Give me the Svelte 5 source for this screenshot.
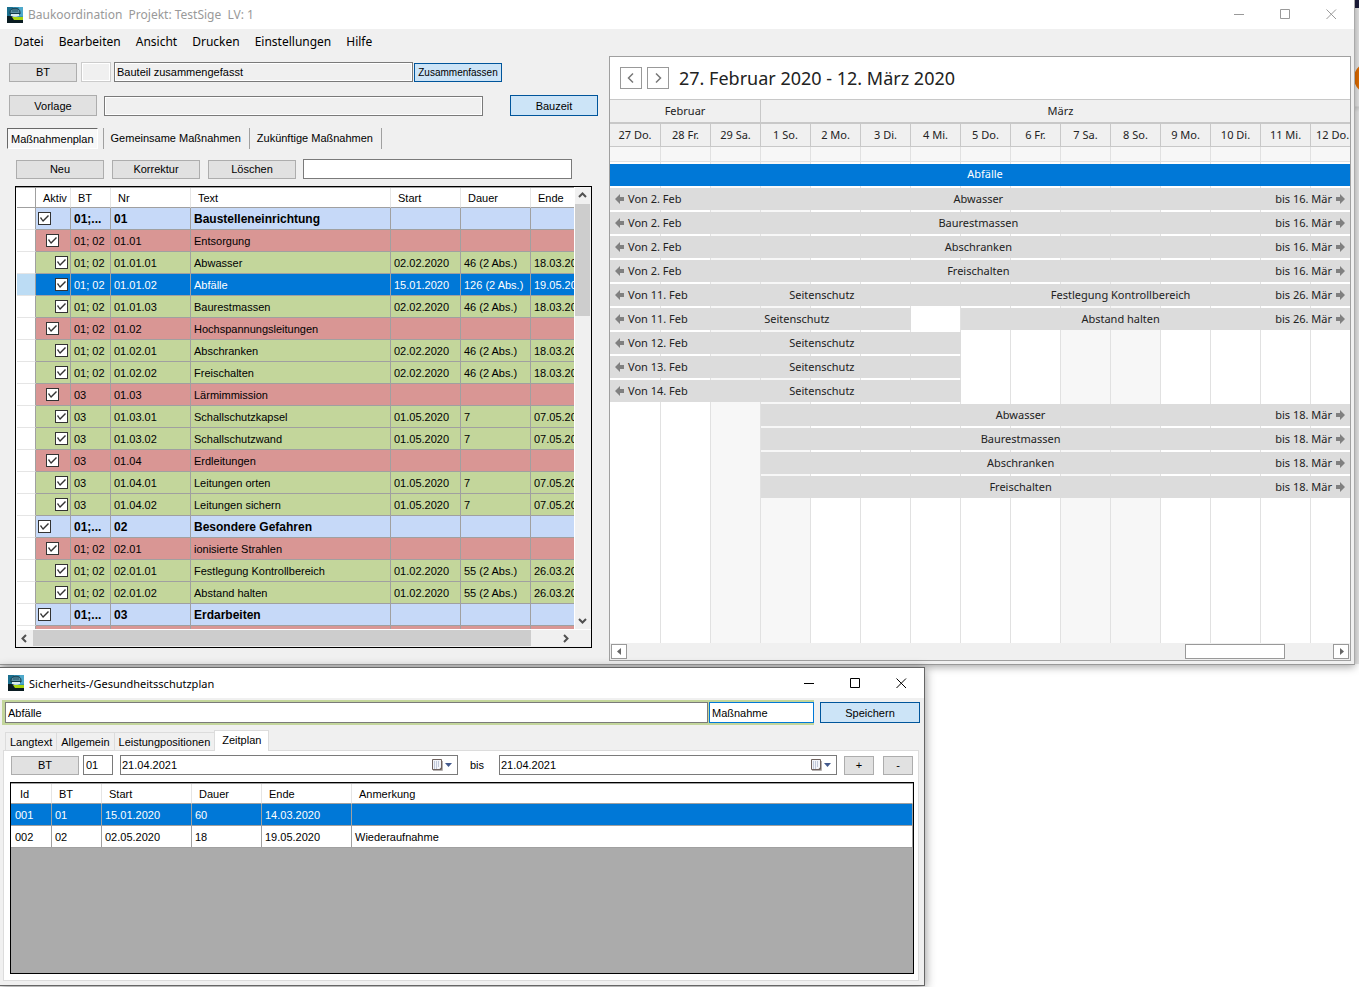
<script>
  const menu = ['Datei', 'Bearbeiten', 'Ansicht', 'Drucken', 'Einstellungen', 'Hilfe'];

  // kind: 0 = Abschnitt, 1 = Gruppe, 2 = Maßnahme
  let measures = $state([
    { kind: 0, bt: '01;...', nr: '01', text: 'Baustelleneinrichtung' },
    { kind: 1, bt: '01; 02', nr: '01.01', text: 'Entsorgung' },
    { kind: 2, bt: '01; 02', nr: '01.01.01', text: 'Abwasser', start: '02.02.2020', days: '46 (2 Abs.)', end: '18.03.2020' },
    { kind: 2, bt: '01; 02', nr: '01.01.02', text: 'Abfälle', start: '15.01.2020', days: '126 (2 Abs.)', end: '19.05.2020' },
    { kind: 2, bt: '01; 02', nr: '01.01.03', text: 'Baurestmassen', start: '02.02.2020', days: '46 (2 Abs.)', end: '18.03.2020' },
    { kind: 1, bt: '01; 02', nr: '01.02', text: 'Hochspannungsleitungen' },
    { kind: 2, bt: '01; 02', nr: '01.02.01', text: 'Abschranken', start: '02.02.2020', days: '46 (2 Abs.)', end: '18.03.2020' },
    { kind: 2, bt: '01; 02', nr: '01.02.02', text: 'Freischalten', start: '02.02.2020', days: '46 (2 Abs.)', end: '18.03.2020' },
    { kind: 1, bt: '03', nr: '01.03', text: 'Lärmimmission' },
    { kind: 2, bt: '03', nr: '01.03.01', text: 'Schallschutzkapsel', start: '01.05.2020', days: '7', end: '07.05.2020' },
    { kind: 2, bt: '03', nr: '01.03.02', text: 'Schallschutzwand', start: '01.05.2020', days: '7', end: '07.05.2020' },
    { kind: 1, bt: '03', nr: '01.04', text: 'Erdleitungen' },
    { kind: 2, bt: '03', nr: '01.04.01', text: 'Leitungen orten', start: '01.05.2020', days: '7', end: '07.05.2020' },
    { kind: 2, bt: '03', nr: '01.04.02', text: 'Leitungen sichern', start: '01.05.2020', days: '7', end: '07.05.2020' },
    { kind: 0, bt: '01;...', nr: '02', text: 'Besondere Gefahren' },
    { kind: 1, bt: '01; 02', nr: '02.01', text: 'ionisierte Strahlen' },
    { kind: 2, bt: '01; 02', nr: '02.01.01', text: 'Festlegung Kontrollbereich', start: '01.02.2020', days: '55 (2 Abs.)', end: '26.03.2020' },
    { kind: 2, bt: '01; 02', nr: '02.01.02', text: 'Abstand halten', start: '01.02.2020', days: '55 (2 Abs.)', end: '26.03.2020' },
    { kind: 0, bt: '01;...', nr: '03', text: 'Erdarbeiten' },
    { kind: 1, bt: '', nr: '', text: '' }
  ].map((m) => ({ ...m, active: true })));
  let selected = $state('01.01.02');

  const days = ['27 Do.', '28 Fr.', '29 Sa.', '1 So.', '2 Mo.', '3 Di.', '4 Mi.', '5 Do.', '6 Fr.', '7 Sa.', '8 So.', '9 Mo.', '10 Di.', '11 Mi.', '12 Do.'];
  const isWeekend = (day) => /Sa|So/.test(day);

  // from / to are grid lines, 1 = left edge of the first day
  const lanes = [
    [{ from: 1, to: 16, text: 'Abfälle', selected: true }],
    [{ from: 1, to: 16, text: 'Abwasser', since: 'Von 2. Feb', until: 'bis 16. Mär' }],
    [{ from: 1, to: 16, text: 'Baurestmassen', since: 'Von 2. Feb', until: 'bis 16. Mär' }],
    [{ from: 1, to: 16, text: 'Abschranken', since: 'Von 2. Feb', until: 'bis 16. Mär' }],
    [{ from: 1, to: 16, text: 'Freischalten', since: 'Von 2. Feb', until: 'bis 16. Mär' }],
    [
      { from: 1, to: 8, text: 'Seitenschutz', since: 'Von 11. Feb' },
      { from: 8, to: 16, text: 'Festlegung Kontrollbereich', until: 'bis 26. Mär' }
    ],
    [
      { from: 1, to: 7, text: 'Seitenschutz', since: 'Von 11. Feb' },
      { from: 8, to: 16, text: 'Abstand halten', until: 'bis 26. Mär' }
    ],
    [{ from: 1, to: 8, text: 'Seitenschutz', since: 'Von 12. Feb' }],
    [{ from: 1, to: 8, text: 'Seitenschutz', since: 'Von 13. Feb' }],
    [{ from: 1, to: 8, text: 'Seitenschutz', since: 'Von 14. Feb' }],
    [{ from: 4, to: 16, text: 'Abwasser', until: 'bis 18. Mär' }],
    [{ from: 4, to: 16, text: 'Baurestmassen', until: 'bis 18. Mär' }],
    [{ from: 4, to: 16, text: 'Abschranken', until: 'bis 18. Mär' }],
    [{ from: 4, to: 16, text: 'Freischalten', until: 'bis 18. Mär' }]
  ];

  const periods = [
    { id: '001', bt: '01', start: '15.01.2020', days: '60', end: '14.03.2020', note: '' },
    { id: '002', bt: '02', start: '02.05.2020', days: '18', end: '19.05.2020', note: 'Wiederaufnahme' }
  ];
  let period = $state('001');
</script>

{#snippet appIcon()}
  <svg class="app-icon" width="16" height="16" viewBox="0 0 16 16" aria-hidden="true">
    <rect width="16" height="16" fill="#3593b8" />
    <path d="M0 0h6L3 10H0z" fill="#1a6f8e" />
    <path d="M12 0h4v9h-4z" fill="#4fa9cb" />
    <path d="M0 9h5l3 2h8v5H0z" fill="#0a1c22" />
    <path d="M5 10h11v3H7z" fill="#a9d40f" />
    <path d="M3 7V5c0-5 10-5 10 0v2z" fill="#5d8fa3" stroke="#123a4a" />
    <path d="M6 2v3M8 1v4M10 2v3" stroke="#22566a" />
    <path d="M3 6h10v1H3z" fill="#123a4a" />
    <path d="M4 7h8v2c-2 1-6 1-8 0z" fill="#dcebf0" />
  </svg>
{/snippet}

{#snippet windowButtons()}
  <div class="window-buttons">
    <button aria-label="Minimieren"><svg width="11" height="11"><path d="M0 5.500h10" /></svg></button>
    <button aria-label="Maximieren"><svg width="11" height="11"><path d="M.5 .5h9v9h-9z" /></svg></button>
    <button aria-label="Schließen"><svg width="11" height="11"><path d="M.5 .5l9.500 9.500M10 .5L.5 10" /></svg></button>
  </div>
{/snippet}

{#snippet chevron(d)}
  <svg class="chevron" width="9" height="9" viewBox="0 0 9 9" aria-hidden="true"><path {d} /></svg>
{/snippet}

{#snippet arrow(d)}
  <svg class="arrow" width="9" height="10" viewBox="0 0 9 10" aria-hidden="true"><path {d} /></svg>
{/snippet}

{#snippet dateBox(label)}
  <div class="date-box">
    <input type="text" value="21.04.2021" aria-label={label} />
    <button aria-label="Kalender öffnen">
      <svg width="22" height="14" viewBox="0 0 22 14">
        <path d="M1.500 1.500h9v10h-9z" fill="#f3f4f8" stroke="#6f625e" />
        <path d="M3 4h6M3 6h6M3 8h6M3 10h4" stroke="#8f9cb8" stroke-dasharray="1 1" />
        <path d="M8 11.500l2.500-2.500v2.500z" fill="#6f625e" />
        <path d="M2 12.500h9.500V3" fill="none" stroke="#b5b1b0" />
        <path d="M14 5h7l-3.500 4z" fill="#43598c" />
      </svg>
    </button>
  </div>
{/snippet}

<div class="desktop">
  <div class="behind" aria-hidden="true"><span class="behind-bar"></span><span class="behind-dot"></span></div>

  <main class="window main-window">
    <header class="titlebar inactive">
      {@render appIcon()}
      <span class="title">Baukoordination&nbsp; Projekt: TestSige&nbsp; LV: 1</span>
      {@render windowButtons()}
    </header>

    <nav class="menu">
      {#each menu as item}
        <button>{item}</button>
      {/each}
    </nav>

    <div class="panes">
      <section class="plan">
        <div class="line">
          <button class="btn bt-btn">BT</button>
          <input class="field code disabled" aria-label="Bauteil Nr" disabled />
          <input class="field grow" aria-label="Bauteil" value="Bauteil zusammengefasst" readonly />
          <button class="btn accent small">Zusammenfassen</button>
        </div>
        <div class="line template">
          <button class="btn tall">Vorlage</button>
          <input class="field grow" aria-label="Vorlage" readonly />
          <button class="btn accent tall">Bauzeit</button>
        </div>

        <div class="toolstrip" role="tablist">
          <button role="tab" class="pressed" aria-selected="true">Maßnahmenplan</button>
          <button role="tab" aria-selected="false">Gemeinsame Maßnahmen</button>
          <button role="tab" aria-selected="false">Zukünftige Maßnahmen</button>
        </div>

        <div class="line actions">
          <button class="btn">Neu</button>
          <button class="btn">Korrektur</button>
          <button class="btn">Löschen</button>
          <input class="field grow search" aria-label="Suche" />
        </div>

        <div class="grid-box">
          <div class="grid-view">
            <table class="grid measures">
              <colgroup>
                <col class="w-head" /><col class="w-active" /><col class="w-bt" /><col class="w-nr" />
                <col class="w-text" /><col class="w-date" /><col class="w-date" /><col class="w-date" />
              </colgroup>
              <thead>
                <tr>
                  <th></th><th>Aktiv</th><th>BT</th><th>Nr</th><th>Text</th><th>Start</th><th>Dauer</th><th>Ende</th>
                </tr>
              </thead>
              <tbody>
                {#each measures as m}
                  <tr class="kind-{m.kind}" class:selected={m.nr === selected} onclick={() => (selected = m.nr)}>
                    <td class="row-head"></td>
                    <td class="check-cell">
                      <input type="checkbox" bind:checked={m.active} aria-label="{m.text} aktiv" />
                    </td>
                    <td>{m.bt}</td>
                    <td>{m.nr}</td>
                    <td>{m.text}</td>
                    <td>{m.start ?? ''}</td>
                    <td>{m.days ?? ''}</td>
                    <td>{m.end ?? ''}</td>
                  </tr>
                {/each}
              </tbody>
            </table>
          </div>
          <div class="vbar">
            <button aria-label="Nach oben">{@render chevron('M1 6l3.500-3.500L8 6')}</button>
            <span class="thumb"></span>
            <button class="last" aria-label="Nach unten">{@render chevron('M1 3l3.500 3.500L8 3')}</button>
          </div>
          <div class="hbar">
            <button aria-label="Nach links">{@render chevron('M6 1L2.500 4.500L6 8')}</button>
            <span class="thumb"></span>
            <button class="last" aria-label="Nach rechts">{@render chevron('M3 1l3.500 3.500L3 8')}</button>
          </div>
        </div>
      </section>

      <section class="gantt">
        <div class="range">
          <button aria-label="Zurück"><svg width="10" height="12"><path d="M7 1.500L2.500 6L7 10.500" /></svg></button>
          <button aria-label="Weiter"><svg width="10" height="12"><path d="M3 1.500L7.500 6L3 10.500" /></svg></button>
          <h1>27. Februar 2020 - 12. März 2020</h1>
        </div>
        <div class="days months">
          <span class="feb">Februar</span>
          <span class="mar">März</span>
        </div>
        <div class="days names">
          {#each days as day}
            <span>{day}</span>
          {/each}
        </div>
        <div class="days all-day">
          {#each days as day}
            <span></span>
          {/each}
        </div>
        <div class="chart">
          <div class="days columns">
            {#each days as day}
              <span class:weekend={isWeekend(day)}></span>
            {/each}
          </div>
          <div class="lanes">
            {#each lanes as lane, i}
              <div class="days lane">
                {#if i === 6}
                  <span class="gap"></span>
                {/if}
                {#each lane as bar}
                  <div class="bar" class:selected={bar.selected} style="grid-column: {bar.from} / {bar.to}">
                    {#if bar.since}
                      {@render arrow('M0 5L5 0v3h4v4H5v3z')}
                      <span class="since">{bar.since}</span>
                    {/if}
                    <span class="bar-text">{bar.text}</span>
                    {#if bar.until}
                      <span class="until">{bar.until}</span>
                      {@render arrow('M9 5L4 0v3H0v4h4v3z')}
                    {/if}
                  </div>
                {/each}
              </div>
            {/each}
          </div>
        </div>
        <div class="chart-scroll">
          <button aria-label="Früher"><svg width="5" height="7"><path d="M4 0v7L0 3.500z" /></svg></button>
          <span class="chart-thumb"></span>
          <button aria-label="Später"><svg width="5" height="7"><path d="M1 0v7l4-3.500z" /></svg></button>
        </div>
      </section>
    </div>
  </main>

  <section class="window detail-window">
    <header class="titlebar">
      {@render appIcon()}
      <span class="title">Sicherheits-/Gesundheitsschutzplan</span>
      {@render windowButtons()}
    </header>

    <div class="head-line">
      <div class="head-fields">
        <input class="field white grow" aria-label="Kurztext" value="Abfälle" />
        <input class="field white type" aria-label="Art" value="Maßnahme" />
      </div>
      <button class="btn accent save">Speichern</button>
    </div>

    <div class="tabs" role="tablist">
      <button role="tab" aria-selected="false">Langtext</button>
      <button role="tab" aria-selected="false">Allgemein</button>
      <button role="tab" aria-selected="false">Leistungpositionen</button>
      <button role="tab" aria-selected="true" class="current">Zeitplan</button>
    </div>

    <div class="tab-page" role="tabpanel">
      <div class="period-line">
        <button class="btn bt-btn">BT</button>
        <input class="field white code" aria-label="Bauteil" value="01" />
        {@render dateBox('Von')}
        <span class="to">bis</span>
        {@render dateBox('Bis')}
        <button class="btn square">+</button>
        <button class="btn square">-</button>
      </div>
      <div class="period-box">
        <table class="grid periods">
          <colgroup>
            <col class="w-id" /><col class="w-pbt" /><col class="w-start" /><col class="w-days" /><col class="w-end" /><col />
          </colgroup>
          <thead>
            <tr><th>Id</th><th>BT</th><th>Start</th><th>Dauer</th><th>Ende</th><th>Anmerkung</th></tr>
          </thead>
          <tbody>
            {#each periods as p}
              <tr class:selected={p.id === period} onclick={() => (period = p.id)}>
                <td>{p.id}</td>
                <td>{p.bt}</td>
                <td>{p.start}</td>
                <td>{p.days}</td>
                <td>{p.end}</td>
                <td>{p.note}</td>
              </tr>
            {/each}
          </tbody>
        </table>
      </div>
    </div>
  </section>
</div>

<style>
  :global(body) {
    background: #fff;
  }

  .desktop {
    position: relative;
    box-sizing: border-box;
    min-height: 100vh;
    padding-right: 4px;
    overflow: hidden;
    color: #000;
    font-family: 'Liberation Sans', Arial, sans-serif;
    font-size: 11px;
  }

  .desktop :global(*) {
    box-sizing: border-box;
  }

  button,
  input {
    margin: 0;
    color: inherit;
    font: inherit;
  }

  button {
    display: flex;
    align-items: center;
    justify-content: center;
    padding: 0;
    border: 0;
    background: none;
    white-space: nowrap;
  }

  /* application peeking out behind the main window */
  .behind {
    position: absolute;
    top: 0;
    right: 0;
    width: 5px;
    height: 664px;
    overflow: hidden;
    background: linear-gradient(#e6e6e6 106px, #cfcfcf 107px, #e6e6e6 112px);
  }

  .behind-bar {
    display: block;
    height: 8px;
    background: #1b1b3a;
  }

  .behind-dot {
    position: absolute;
    top: 62px;
    left: 0;
    width: 32px;
    height: 32px;
    border-radius: 50%;
    background: #e06c00;
  }

  .window {
    position: relative;
    background: #f0f0f0;
  }

  .main-window {
    border-right: 1px solid #aaa;
    border-bottom: 1px solid #999;
    box-shadow: 0 2px 8px rgba(0, 0, 0, 0.35);
  }

  .detail-window {
    width: 925px;
    max-width: 100%;
    margin-top: 2px;
    padding-bottom: 4px;
    border: 1px solid #666;
    border-left: 0;
    box-shadow: 0 2px 10px rgba(0, 0, 0, 0.45);
  }

  /* title bar */
  .titlebar {
    display: flex;
    align-items: center;
    height: 30px;
    padding-left: 8px;
    background: #fff;
    font-family: 'Noto Sans', 'Segoe UI', sans-serif;
    font-size: 11px;
  }

  .titlebar.inactive {
    height: 29px;
    padding-left: 7px;
    color: #999;
  }

  .app-icon {
    flex-shrink: 0;
  }

  .title {
    flex: 1;
    margin-left: 5px;
    white-space: nowrap;
  }

  .inactive .title {
    font-size: 12px;
  }

  .window-buttons {
    display: flex;
  }

  .window-buttons button {
    width: 46px;
    height: 29px;
  }

  .window-buttons svg {
    fill: none;
    stroke: currentColor;
  }

  .menu {
    display: flex;
    gap: 15px;
    height: 24px;
    padding-top: 1px;
    padding-left: 14px;
    font-family: 'Noto Sans', 'Segoe UI', sans-serif;
    font-size: 12px;
  }

  .panes {
    display: flex;
    padding: 3px 3px 3px 0;
  }

  .plan {
    flex: 0 0 609px;
    padding-top: 6px;
  }

  /* form controls */
  .btn {
    flex: 0 0 88px;
    height: 19px;
    border: 1px solid #adadad;
    background: #e1e1e1;
  }

  .btn.tall {
    height: 21px;
  }

  .btn.small {
    font-size: 10px;
  }

  .btn.bt-btn {
    flex-basis: 68px;
  }

  .btn.accent {
    border-color: #00559b;
    background: #cce4f7;
  }

  .btn.save {
    flex-basis: 100px;
    height: 21px;
  }

  .btn.square {
    flex-basis: 30px;
  }

  .field {
    min-width: 0;
    height: 20px;
    padding: 0 2px;
    border: 1px solid #7a7a7a;
    outline: 0;
    background: #f0f0f0;
    box-shadow: inset 0 0 0 1px #fff;
  }

  .field.white,
  .field.search {
    background: #fff;
  }

  .field.disabled {
    border-color: #ccc;
  }

  .field.code {
    flex: 0 0 30px;
  }

  .grow {
    flex: 1;
  }

  .line {
    display: flex;
    align-items: center;
    padding-left: 9px;
  }

  .line:first-child {
    padding-right: 107px;
  }

  .line .code {
    margin: 0 3px 0 4px;
  }

  .line .small {
    margin-left: 1px;
  }

  .template {
    margin-top: 13px;
    padding-right: 11px;
  }

  .template .field {
    margin: 0 27px 0 7px;
  }

  .toolstrip {
    display: flex;
    height: 21px;
    margin: 12px 0 0 7px;
  }

  .toolstrip button {
    padding: 0 8px 1px 7px;
    border-right: 1px solid #a0a0a0;
  }

  .toolstrip .pressed {
    margin-right: 5px;
    padding: 0 3px;
    border: 1px solid #fff;
    border-top-color: #696969;
    border-left-color: #696969;
    background: #f8f8f8;
  }

  .toolstrip .pressed + button {
    border-left: 1px solid #a0a0a0;
  }

  .actions {
    gap: 8px;
    margin-top: 10px;
    padding: 0 37px 0 16px;
  }

  .search {
    margin-left: -1px;
  }

  /* data grids */
  .grid-box {
    display: grid;
    grid-template: 442px 18px / minmax(0, 1fr) 17px;
    margin: 7px 17px 13px 15px;
    border: 1px solid #000;
    background: #f0f0f0;
  }

  .grid-view {
    overflow: hidden;
    padding: 1px 0 0 1px;
    background: #fff;
    box-shadow: inset 0 1px 0 #a0a0a0;
  }

  .grid {
    border-collapse: separate;
    border-spacing: 0;
    table-layout: fixed;
  }

  .grid th {
    height: 20px;
    padding: 0 0 0 7px;
    border-right: 1px solid #e5e5e5;
    border-bottom: 1px solid #a0a0a0;
    background: #fff;
    font-weight: 400;
    text-align: left;
  }

  .grid td {
    height: 22px;
    padding: 0 0 0 3px;
    overflow: hidden;
    border-right: 1px solid #a0a0a0;
    border-bottom: 1px solid #a0a0a0;
    white-space: nowrap;
  }

  .measures {
    width: 584px;
  }

  .w-head { width: 19px; }
  .w-active { width: 35px; }
  .w-bt { width: 40px; }
  .w-nr { width: 80px; }
  .w-text { width: 200px; }
  .w-date { width: 70px; }

  .measures th:first-child {
    border-right-color: #a0a0a0;
  }

  .kind-0 {
    background: #c6d9f8;
    font-size: 12px;
    font-weight: 700;
  }

  .kind-1 {
    background: #d99694;
  }

  .kind-2 {
    background: #c3d69b;
  }

  .grid .selected {
    background: #0078d7;
    color: #fff;
  }

  .grid .row-head {
    border-bottom-color: #e5e5e5;
    background: #fff;
  }

  .grid .selected .row-head {
    background: #bcdcf4;
  }

  .grid .check-cell {
    padding-left: 2px;
  }

  .grid .kind-1 .check-cell {
    padding-left: 10px;
  }

  .grid .kind-2 .check-cell {
    padding-left: 19px;
  }

  .check-cell input {
    display: block;
    width: 13px;
    height: 13px;
    border: 1px solid #333;
    background: #fff;
    appearance: none;
  }

  .check-cell input:checked::before {
    content: '';
    display: block;
    width: 11px;
    height: 11px;
    background: #333;
    clip-path: polygon(1px 5px, 2px 4px, 4px 7px, 9px 2px, 10px 3px, 4px 9px);
  }

  .chevron {
    fill: none;
    stroke: #505050;
    stroke-width: 2;
  }

  .vbar,
  .hbar {
    display: flex;
    border: 0 solid #fff;
  }

  .vbar {
    flex-direction: column;
    padding-right: 1px;
    border-left-width: 1px;
  }

  .hbar {
    grid-column: 1 / -1;
    padding: 0 17px 1px 0;
    border-top-width: 1px;
  }

  .vbar button,
  .hbar button {
    flex: 0 0 17px;
  }

  .vbar .last {
    margin-top: auto;
  }

  .hbar .last {
    margin-left: auto;
  }

  .thumb {
    background: #cdcdcd;
  }

  .vbar .thumb {
    flex: 0 0 112px;
  }

  .hbar .thumb {
    flex: 0 0 498px;
  }

  /* gantt chart */
  .gantt {
    display: flex;
    flex: 1;
    flex-direction: column;
    min-width: 0;
    overflow: hidden;
    border: 1px solid #a0a0a0;
    background: #fff;
    color: #222;
    font-family: 'Noto Sans', Tahoma, sans-serif;
  }

  .range {
    display: flex;
    align-items: center;
    height: 42px;
    padding-left: 10px;
  }

  .range button {
    width: 22px;
    height: 22px;
    margin-right: 5px;
    border: 1px solid #999;
  }

  .range svg {
    fill: none;
    stroke: #777;
    stroke-width: 1.5;
  }

  .range h1 {
    margin: 0 0 0 5px;
    font-size: 18px;
    font-weight: 400;
    white-space: nowrap;
  }

  .days {
    display: grid;
    grid-template-columns: 51px repeat(13, 50px) minmax(0, 1fr);
  }

  .days > span {
    display: flex;
    align-items: center;
    justify-content: center;
    padding-bottom: 2px;
    border-right: 1px solid #c8c8c8;
    white-space: nowrap;
  }

  .days > span:last-child {
    border-right: 0;
  }

  .months {
    height: 25px;
    border-top: 1px solid #c8c8c8;
    border-bottom: 2px solid #c8c8c8;
    background: #f0f0f0;
  }

  .months .feb {
    grid-column: 1 / 4;
  }

  .months .mar {
    grid-column: 4 / -1;
    padding-left: 10px;
  }

  .names {
    height: 23px;
    border-bottom: 1px solid #c8c8c8;
    background: #f0f0f0;
  }

  .names > span:last-child {
    justify-content: flex-start;
    padding-left: 5px;
  }

  .all-day {
    height: 15px;
    border-bottom: 1px solid #e1e1e1;
    background: #f7f7f7;
  }

  .all-day > span,
  .columns > span {
    border-color: #e1e1e1;
  }

  .chart {
    display: grid;
    flex: 1;
  }

  .columns,
  .lanes {
    grid-area: 1 / 1;
    min-width: 0;
  }

  .columns .weekend {
    background: #f7f7f7;
  }

  .lanes {
    display: flex;
    flex-direction: column;
    gap: 2px;
    padding-top: 2px;
  }

  .lane .gap {
    grid-area: 1 / 7;
    background: #fff;
    border-color: #e1e1e1;
  }

  .bar {
    display: flex;
    grid-row: 1;
    align-items: center;
    height: 22px;
    padding: 0 5px 1px;
    background: #dcdcdc;
    white-space: nowrap;
  }

  .bar.selected {
    padding: 0 0 3px 10px;
    background: #0078d7;
    color: #fff;
  }

  .bar-text {
    flex: 1;
    text-align: center;
  }

  .since {
    margin-left: 4px;
  }

  .until {
    margin-right: 4px;
  }

  .arrow {
    flex-shrink: 0;
    fill: #808080;
  }

  .chart-scroll {
    display: flex;
    height: 17px;
    padding: 1px;
    background: #f0f0f0;
  }

  .chart-scroll button {
    width: 16px;
    border: 1px solid #999;
    background: #fff;
  }

  .chart-scroll svg {
    fill: #666;
  }

  .chart-thumb {
    width: 100px;
    margin: 0 48px 0 auto;
    border: 1px solid #999;
    background: #fff;
  }

  /* detail window */
  .head-line {
    display: flex;
    align-items: center;
    gap: 6px;
    padding: 2px 4px 0 2px;
  }

  .head-fields {
    display: flex;
    flex: 1;
    gap: 1px;
    padding: 2px 0 2px 3px;
    background: #c3d69b;
  }

  .head-fields .type {
    flex: 0 0 105px;
    border-color: #0078d7;
  }

  .head-fields .field {
    height: 21px;
  }

  .tabs {
    display: flex;
    align-items: flex-end;
    height: 25px;
    padding-left: 5px;
  }

  .tabs button {
    height: 18px;
    padding: 0 4px;
    border: 1px solid #dcdcdc;
    border-right-width: 0;
    border-bottom: 0;
  }

  .tabs .current {
    position: relative;
    height: 21px;
    margin-bottom: -1px;
    padding: 0 7px 2px;
    border-right-width: 1px;
    background: #fff;
  }

  .tab-page {
    margin: 0 5px 0 3px;
    padding: 4px 4px 6px 6px;
    border: 1px solid #dcdcdc;
    background: #fff;
  }

  .period-line {
    display: flex;
    align-items: center;
    padding: 0 1px;
  }

  .period-line .code {
    margin: 0 7px 0 4px;
  }

  .period-line .square {
    margin-left: 7px;
  }

  .period-line .square + .square {
    margin-left: 9px;
  }

  .date-box {
    display: flex;
    flex: 1;
    height: 20px;
    border: 1px solid #7a7a7a;
    background: #fff;
  }

  .date-box input {
    flex: 1;
    min-width: 0;
    padding: 0 0 0 1px;
    border: 0;
    outline: 0;
    background: none;
  }

  .date-box button {
    width: 30px;
  }

  .to {
    width: 41px;
    padding-right: 3px;
    text-align: center;
  }

  .period-box {
    height: 192px;
    margin-top: 7px;
    padding-top: 1px;
    border: 1px solid #000;
    background: #ababab;
    box-shadow: inset 0 1px 0 #a0a0a0;
  }

  .periods {
    width: 100%;
    background: #fff;
  }

  .periods th:first-child {
    padding-left: 9px;
  }

  .periods td:first-child {
    padding-left: 4px;
  }

  .w-id { width: 41px; }
  .w-pbt { width: 50px; }
  .w-start { width: 90px; }
  .w-days { width: 70px; }
  .w-end { width: 90px; }
</style>
